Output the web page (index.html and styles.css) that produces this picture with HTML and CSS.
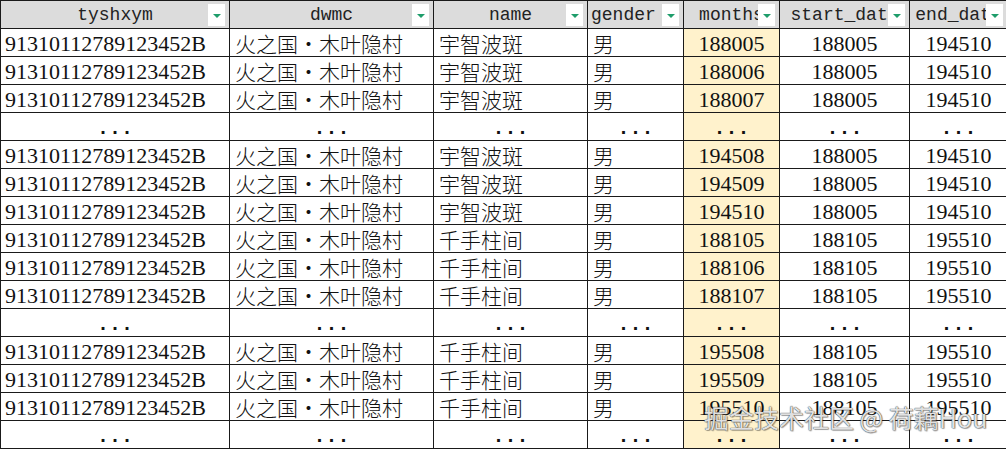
FILE: index.html
```html
<!DOCTYPE html>
<html lang="zh">
<head>
<meta charset="utf-8">
<link rel="stylesheet" href="styles.css">
</head>
<body>
<div class="sheet">
<table class="grid">
<colgroup>
<col class="c1"><col class="c2"><col class="c3"><col class="c4"><col class="c5"><col class="c6"><col class="c7">
</colgroup>
<thead>
<tr>
<th><span class="lbl">tyshxym</span><span class="flt"><i></i></span></th>
<th><span class="lbl">dwmc</span><span class="flt"><i></i></span></th>
<th><span class="lbl">name</span><span class="flt"><i></i></span></th>
<th class="hl"><span class="lbl">gender</span><span class="flt"><i></i></span></th>
<th><span class="lbl">months</span><span class="flt"><i></i></span></th>
<th><span class="lbl">start_date</span><span class="flt"><i></i></span></th>
<th><span class="lbl">end_date</span><span class="flt"><i></i></span></th>
</tr>
</thead>
<tbody>
<tr><td>91310112789123452B</td><td class="cjk">火之国・木叶隐村</td><td class="cjk">宇智波斑</td><td class="cjk">男</td><td class="m">188005</td><td class="n">188005</td><td class="n">194510</td></tr>
<tr><td>91310112789123452B</td><td class="cjk">火之国・木叶隐村</td><td class="cjk">宇智波斑</td><td class="cjk">男</td><td class="m">188006</td><td class="n">188005</td><td class="n">194510</td></tr>
<tr><td>91310112789123452B</td><td class="cjk">火之国・木叶隐村</td><td class="cjk">宇智波斑</td><td class="cjk">男</td><td class="m">188007</td><td class="n">188005</td><td class="n">194510</td></tr>
<tr class="dots"><td>...</td><td>...</td><td>...</td><td>...</td><td class="m">...</td><td>...</td><td>...</td></tr>
<tr><td>91310112789123452B</td><td class="cjk">火之国・木叶隐村</td><td class="cjk">宇智波斑</td><td class="cjk">男</td><td class="m">194508</td><td class="n">188005</td><td class="n">194510</td></tr>
<tr><td>91310112789123452B</td><td class="cjk">火之国・木叶隐村</td><td class="cjk">宇智波斑</td><td class="cjk">男</td><td class="m">194509</td><td class="n">188005</td><td class="n">194510</td></tr>
<tr><td>91310112789123452B</td><td class="cjk">火之国・木叶隐村</td><td class="cjk">宇智波斑</td><td class="cjk">男</td><td class="m">194510</td><td class="n">188005</td><td class="n">194510</td></tr>
<tr><td>91310112789123452B</td><td class="cjk">火之国・木叶隐村</td><td class="cjk">千手柱间</td><td class="cjk">男</td><td class="m">188105</td><td class="n">188105</td><td class="n">195510</td></tr>
<tr><td>91310112789123452B</td><td class="cjk">火之国・木叶隐村</td><td class="cjk">千手柱间</td><td class="cjk">男</td><td class="m">188106</td><td class="n">188105</td><td class="n">195510</td></tr>
<tr><td>91310112789123452B</td><td class="cjk">火之国・木叶隐村</td><td class="cjk">千手柱间</td><td class="cjk">男</td><td class="m">188107</td><td class="n">188105</td><td class="n">195510</td></tr>
<tr class="dots"><td>...</td><td>...</td><td>...</td><td>...</td><td class="m">...</td><td>...</td><td>...</td></tr>
<tr><td>91310112789123452B</td><td class="cjk">火之国・木叶隐村</td><td class="cjk">千手柱间</td><td class="cjk">男</td><td class="m">195508</td><td class="n">188105</td><td class="n">195510</td></tr>
<tr><td>91310112789123452B</td><td class="cjk">火之国・木叶隐村</td><td class="cjk">千手柱间</td><td class="cjk">男</td><td class="m">195509</td><td class="n">188105</td><td class="n">195510</td></tr>
<tr><td>91310112789123452B</td><td class="cjk">火之国・木叶隐村</td><td class="cjk">千手柱间</td><td class="cjk">男</td><td class="m">195510</td><td class="n">188105</td><td class="n">195510</td></tr>
<tr class="dots"><td>...</td><td>...</td><td>...</td><td>...</td><td class="m">...</td><td>...</td><td>...</td></tr>
</tbody>
</table>
<div class="watermark">掘金技术社区 @ 荷藕Hou</div>
</div>
</body>
</html>
```
FILE: styles.css
```css
html, body {
  margin: 0;
  padding: 0;
  background: #ffffff;
  overflow: hidden;
}
.sheet {
  position: relative;
  width: 1006px;
  height: 449px;
  overflow: hidden;
}
.grid {
  border-collapse: collapse;
  table-layout: fixed;
  width: 1007px;
  color: #111;
}
.c1 { width: 229px; }
.c2 { width: 204px; }
.c3 { width: 154px; }
.c4 { width: 96px; }
.c5 { width: 96px; }
.c6 { width: 130px; }
.c7 { width: 98px; }

.grid tr {
  height: 28px;
}
.grid th, .grid td {
  border: 1px solid #1a1a1a;
  height: 28px;
  padding: 0 4px;
  box-sizing: border-box;
  vertical-align: bottom;
  white-space: nowrap;
  overflow: hidden;
}
.grid td {
  font-family: "Liberation Serif", serif;
  font-size: 22px;
  line-height: 25px;
  text-align: left;
  color: #111;
}
.grid th {
  position: relative;
  background: #dcdcdc;
  font-family: "Liberation Mono", monospace;
  font-weight: normal;
  font-size: 18px;
  line-height: 25px;
  text-align: center;
  color: #222;
  padding: 0;
}
.grid th.hl {
  text-align: left;
  padding-left: 3px;
}
.flt {
  position: absolute;
  top: 3px;
  right: 4px;
  width: 17px;
  height: 22px;
  background: #ffffff;
  display: flex;
  align-items: center;
  justify-content: center;
}
.flt i {
  display: block;
  width: 0;
  height: 0;
  margin-top: 2px;
  border-left: 4px solid transparent;
  border-right: 4px solid transparent;
  border-top: 4px solid #1e9d6b;
}
.grid td.cjk {
  font-family: "Noto Sans CJK SC", sans-serif;
  font-weight: 300;
  font-size: 21px;
  line-height: 26px;
  padding-left: 5px;
}
.grid td.m {
  background: #fff2cc;
  text-align: center;
}
.grid td.n {
  text-align: center;
}
.grid tr.dots td {
  text-align: center;
  font-family: "Liberation Mono", monospace;
  font-weight: bold;
  font-size: 20px;
  line-height: 22px;
  overflow: visible;
}
.watermark {
  position: absolute;
  left: 704px;
  top: 402px;
  font-family: "Noto Sans CJK SC", sans-serif;
  font-size: 25px;
  line-height: 30px;
  color: rgba(255, 255, 255, 0.85);
  white-space: nowrap;
  text-shadow: 0 0 1px rgba(60, 60, 60, 0.9), 0 0 1px rgba(60, 60, 60, 0.9), 1px 1px 1px rgba(0, 0, 0, 0.3);
}
```
